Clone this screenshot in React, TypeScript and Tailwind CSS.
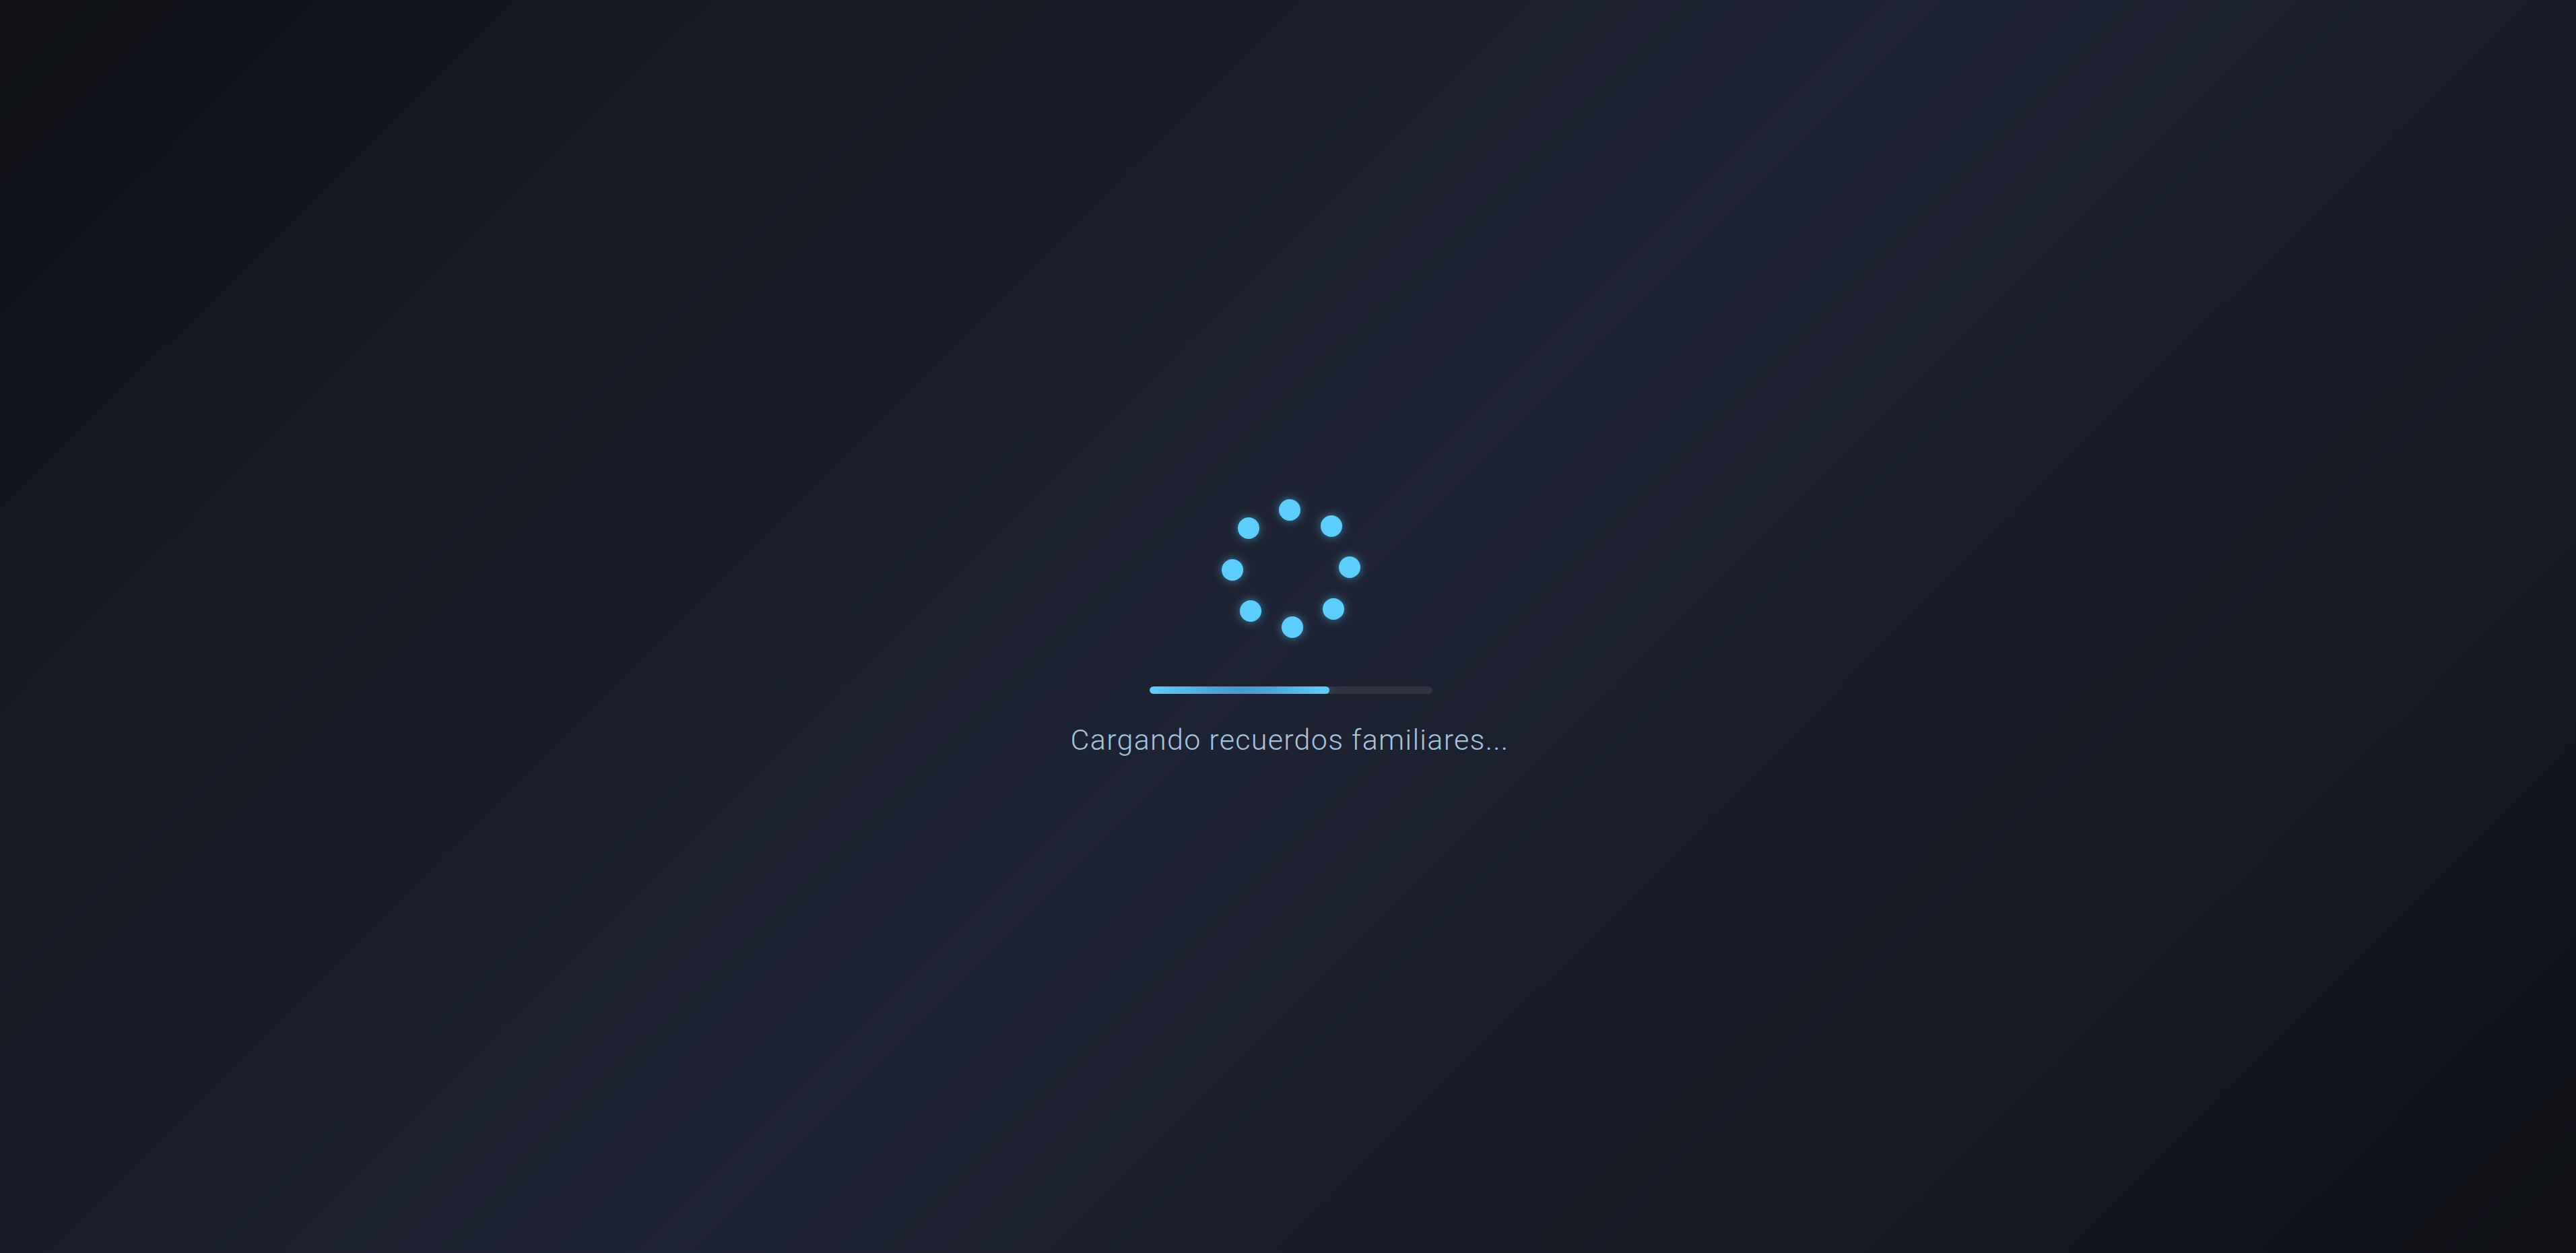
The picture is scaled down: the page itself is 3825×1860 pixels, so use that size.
import { useMemo } from "react";

const DOT_COUNT = 8;
const RADIUS = 87;
const DOT_SIZE = 32;
const BOX = RADIUS * 2 + DOT_SIZE;
const ROTATION = -1.3; // degrees, the frame the spinner was caught in

function Spinner() {
  const dots = useMemo(
    () =>
      Array.from({ length: DOT_COUNT }, (_, i) => {
        const angle = ((i * 360) / DOT_COUNT + ROTATION - 90) * (Math.PI / 180);
        return {
          left: BOX / 2 + RADIUS * Math.cos(angle) - DOT_SIZE / 2,
          top: BOX / 2 + RADIUS * Math.sin(angle) - DOT_SIZE / 2,
        };
      }),
    []
  );

  return (
    <div className="relative h-[206px] w-[206px]" role="status" aria-label="Cargando">
      {dots.map((pos, i) => (
        <span
          key={i}
          className="absolute h-[32px] w-[32px] rounded-full bg-[#5bcefd] shadow-[0_0_14px_rgba(91,206,253,0.55)]"
          style={{ left: pos.left, top: pos.top }}
        />
      ))}
    </div>
  );
}

function ProgressBar({ value }: { value: number }) {
  return (
    <div className="h-[11px] w-[420px] overflow-hidden rounded-full bg-[#2f343f]">
      <div
        className="h-full rounded-full bg-[linear-gradient(90deg,#5ccfff_0%,#4aa6da_35%,#4499d0_50%,#4aa8dc_70%,#5ccfff_100%)] shadow-[0_0_16px_rgba(92,207,255,0.35)]"
        style={{ width: `${value}%` }}
      />
    </div>
  );
}

export default function App() {
  return (
    <div className="flex h-screen w-full flex-col items-center justify-center bg-[linear-gradient(135deg,#101217_0%,#1e2334_50%,#101217_100%)] pl-[9px] pt-[4px] font-['Roboto','Liberation_Sans',sans-serif]">
      <Spinner />
      <div className="mt-[72px]">
        <ProgressBar value={63.5} />
      </div>
      <p className="mt-[43px] -ml-[4px] text-[43px] font-light leading-[50px] tracking-[1.3px] text-[#a4c5df]">
        Cargando recuerdos familiares...
      </p>
    </div>
  );
}
